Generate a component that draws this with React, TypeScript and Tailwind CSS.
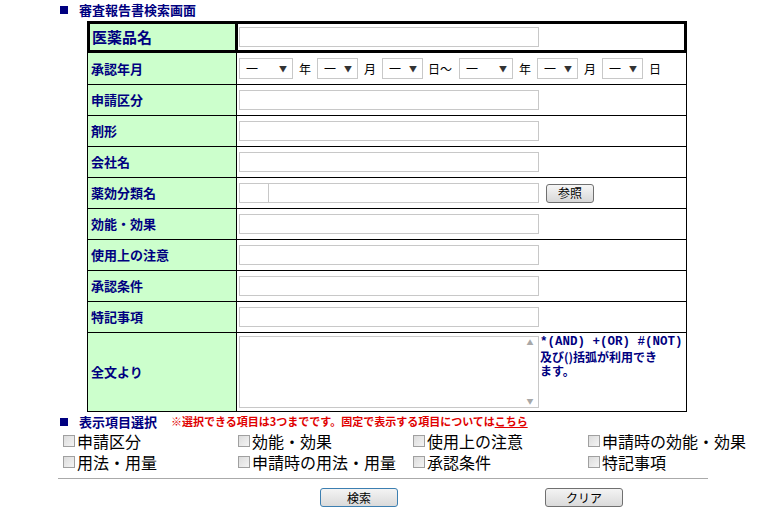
import React from "react";

const font = { fontFamily: '"Noto Sans CJK JP", "Liberation Sans", sans-serif' };

function Sel({ w }: { w: string }) {
  return (
    <div
      className={`flex h-[21px] items-center justify-between border border-[#c8c8c8] bg-white pl-[6px] pr-[5px] text-[12px] text-black ${w}`}
    >
      <span>一</span>
      <span className="text-[8px] leading-none text-[#333]">▼</span>
    </div>
  );
}

function TextBox() {
  return <div className="h-[20px] w-[300px] border border-[#c8c8c8] bg-white" />;
}

function Row({ label, h = "h-[31px]", children }: { label: string; h?: string; children?: React.ReactNode }) {
  return (
    <div className={`flex border-x border-b border-black ${h}`}>
      <div className="flex w-[149px] items-center border-r border-black bg-[#ccffcc] pl-[3px] text-[13px] font-bold text-[#000080]">
        {label}
      </div>
      <div className="flex flex-1 items-center pl-[2px]">{children}</div>
    </div>
  );
}

function Check({ label }: { label: string }) {
  return (
    <div className="flex h-[21px] items-center gap-[2px] text-[16px] leading-[18px] text-black">
      <span className="h-[12px] w-[12px] border border-[#a0a0a0] bg-gradient-to-br from-[#dcdcdc] to-[#f4f4f4]" />
      <span>{label}</span>
    </div>
  );
}

export default function App() {
  return (
    <div className="h-[513px] w-[782px] bg-white" style={font}>
      {/* heading */}
      <div className="flex items-center pb-[3px] pl-[60px] pt-[2px] text-[13px] font-bold leading-[16px] text-[#000080]">
        <span className="mr-[11px] h-[8px] w-[8px] bg-[#000080]" />
        審査報告書検索画面
      </div>

      <div className="ml-[87px] w-[600px]">
        {/* first row, thick */}
        <div className="flex h-[32px] border-[3px] border-black">
          <div className="flex w-[148px] items-center border-r-[3px] border-black bg-[#ccffcc] pl-[2px] text-[15px] font-bold text-[#000080]">
            医薬品名
          </div>
          <div className="flex flex-1 items-center pl-[1px]">
            <TextBox />
          </div>
        </div>

        <Row label="承認年月" h="h-[32px]">
          <div className="flex items-center text-[12px] text-black">
            <Sel w="w-[54px]" />
            <span className="mx-[6px]">年</span>
            <Sel w="w-[41px]" />
            <span className="mx-[6px]">月</span>
            <Sel w="w-[41px]" />
            <span className="ml-[5px] mr-[7px]">日～</span>
            <Sel w="w-[54px]" />
            <span className="mx-[6px]">年</span>
            <Sel w="w-[41px]" />
            <span className="mx-[6px]">月</span>
            <Sel w="w-[41px]" />
            <span className="ml-[6px]">日</span>
          </div>
        </Row>
        <Row label="申請区分">
          <TextBox />
        </Row>
        <Row label="剤形">
          <TextBox />
        </Row>
        <Row label="会社名">
          <TextBox />
        </Row>
        <Row label="薬効分類名">
          <div className="flex h-[20px] w-[300px] border border-[#c8c8c8] bg-white">
            <div className="w-[29px] border-r border-[#c8c8c8]" />
          </div>
          <button className="ml-[7px] h-[19px] w-[48px] rounded-[3px] border border-[#707070] bg-gradient-to-b from-[#f6f6f6] to-[#d8d8d8] text-[12px] leading-none text-black">
            参照
          </button>
        </Row>
        <Row label="効能・効果">
          <TextBox />
        </Row>
        <Row label="使用上の注意">
          <TextBox />
        </Row>
        <Row label="承認条件">
          <TextBox />
        </Row>
        <Row label="特記事項">
          <TextBox />
        </Row>

        {/* full text row */}
        <div className="flex h-[79px] border-x border-b border-black">
          <div className="flex w-[149px] items-center border-r border-black bg-[#ccffcc] pl-[3px] text-[13px] font-bold text-[#000080]">
            全文より
          </div>
          <div className="flex flex-1 pl-[2px] pt-[3px]">
            <div className="flex h-[72px] w-[300px] border border-[#c8c8c8] bg-white">
              <div className="flex-1" />
              <div className="flex w-[16px] flex-col items-center justify-between py-[2px] text-[7px] leading-none text-[#a8a8a8]">
                <span>▲</span>
                <span>▼</span>
              </div>
            </div>
            <div className="ml-[1px] flex flex-col text-[12px] font-bold leading-[13px] text-[#000080]">
              <span style={{ fontFamily: '"Liberation Mono", monospace' }} className="mb-px text-[12.5px]">
                *(AND) +(OR) #(NOT)
              </span>
              <span className="mb-px">及び()括弧が利用でき</span>
              <span>ます。</span>
            </div>
          </div>
        </div>
      </div>

      {/* display items */}
      <div className="mt-px flex items-center pl-[60px] text-[13px] font-bold leading-[17px]">
        <span className="mr-[11px] h-[8px] w-[8px] bg-[#000080]" />
        <span className="text-[#000080]">表示項目選択</span>
        <span className="ml-[14px] text-[11px] text-[#e00000]">
          ※選択できる項目は3つまでです。固定で表示する項目については
          <span className="underline">こちら</span>
        </span>
      </div>
      <div className="ml-[63px] grid w-[700px] grid-cols-4">
        <Check label="申請区分" />
        <Check label="効能・効果" />
        <Check label="使用上の注意" />
        <Check label="申請時の効能・効果" />
        <Check label="用法・用量" />
        <Check label="申請時の用法・用量" />
        <Check label="承認条件" />
        <Check label="特記事項" />
      </div>

      <div className="ml-[58px] mt-[6px] h-px w-[650px] bg-[#aaaaaa]" />

      <div className="mt-[9px] flex">
        <button className="ml-[320px] h-[19px] w-[78px] rounded-[3px] border border-[#3c7fb1] bg-gradient-to-b from-[#f4f4f4] to-[#dadada] text-[12px] leading-none text-black">
          検索
        </button>
        <button className="ml-[147px] h-[19px] w-[78px] rounded-[3px] border border-[#707070] bg-gradient-to-b from-[#f4f4f4] to-[#dadada] text-[12px] leading-none text-black">
          クリア
        </button>
      </div>
    </div>
  );
}
